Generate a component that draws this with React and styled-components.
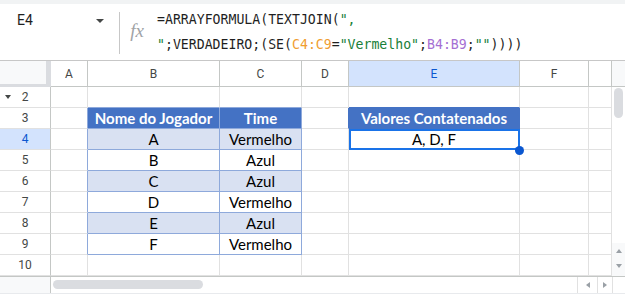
import React from "react";
import styled, { createGlobalStyle } from "styled-components";

const GlobalStyle = createGlobalStyle`
  html, body { margin: 0; padding: 0; background: #fff; }
  body { font-family: Roboto, "Liberation Sans", sans-serif; overflow: hidden; }
  * { box-sizing: border-box; }
`;

const Page = styled.div`
  width: 625px;
  height: 294px;
  display: flex;
  flex-direction: column;
  overflow: hidden;
`;

const TopStrip = styled.div`
  height: 4px;
  background: #f1f3f4;
`;

const FormulaBar = styled.div`
  height: 57px;
  display: flex;
  border-bottom: 1px solid #c7c7c7;
  background: #fff;
`;

const NameBox = styled.div`
  width: 119px;
  height: 32px;
  display: flex;
  align-items: center;
  justify-content: space-between;
  padding: 0 15px 0 17px;
  font-size: 14px;
  color: #1f1f1f;
`;

const Caret = styled.span`
  width: 0;
  height: 0;
  border-left: 4px solid transparent;
  border-right: 4px solid transparent;
  border-top: 4px solid #444746;
  margin-top: 1px;
`;

const Divider = styled.div`
  width: 1px;
  height: 42px;
  margin-top: 8px;
  background: #c7c7c7;
`;

const Fx = styled.div`
  width: 37px;
  display: flex;
  align-items: center;
  justify-content: center;
  padding: 0 3px 2px 0;
  font-family: "Liberation Serif", serif;
  font-style: italic;
  font-size: 19px;
  color: #a0a3a6;
`;

const Formula = styled.div`
  padding-top: 3px;
  font-family: "DejaVu Sans Mono", "Liberation Mono", monospace;
  font-size: 13.2px;
  line-height: 25px;
  color: #1f1f1f;
  white-space: pre;
`;

const Tok = styled.span`
  color: ${(p) =>
    p.$k === "str" ? "#188038" : p.$k === "r1" ? "#f09d31" : p.$k === "r2" ? "#a56fd3" : "#1f1f1f"};
`;

const Body = styled.div`
  display: flex;
`;

const Grid = styled.div`
  display: grid;
  grid-template-columns: 51px 37px 132px 82px 47px 171px 69px 23px;
  grid-template-rows: 26px repeat(9, 21px);
  width: 612px;
`;

const Corner = styled.div`
  background: #f8f9fa;
  border-right: 5px solid #dadce0;
  border-bottom: 3px solid #dadce0;
`;

const ColHead = styled.div`
  display: flex;
  align-items: center;
  justify-content: center;
  font-size: 12px;
  color: ${(p) => (p.$sel ? "#0b57d0" : "#444746")};
  background: ${(p) => (p.$sel ? "#d3e3fd" : "#fff")};
  border-right: 1px solid #c4c7c5;
  border-bottom: 1px solid #c4c7c5;
`;

const RowHead = styled.div`
  position: relative;
  display: flex;
  align-items: center;
  justify-content: center;
  font-size: 12px;
  color: ${(p) => (p.$sel ? "#0b57d0" : "#444746")};
  background: ${(p) => (p.$sel ? "#d3e3fd" : "#fff")};
  border-right: 1px solid #c4c7c5;
  border-bottom: 1px solid #e1e1e1;
`;

const GroupCaret = styled.span`
  position: absolute;
  left: 5px;
  top: 8px;
  width: 0;
  height: 0;
  border-left: 3.5px solid transparent;
  border-right: 3.5px solid transparent;
  border-top: 4px solid #444746;
`;

const Cell = styled.div`
  position: relative;
  display: flex;
  align-items: flex-end;
  justify-content: center;
  padding-bottom: 1px;
  font-family: Lato, "Open Sans", sans-serif;
  font-size: 15px;
  line-height: 18px;
  font-weight: ${(p) => (p.$head ? 700 : 400)};
  color: ${(p) => (p.$head ? "#fff" : "#000")};
  background: ${(p) => p.$bg || "#fff"};
  border-right: 1px solid ${(p) => p.$r || "#e1e1e1"};
  border-bottom: 1px solid ${(p) => p.$b || "#e1e1e1"};
  white-space: nowrap;
`;

const Selection = styled.div`
  position: absolute;
  top: 0;
  left: 0;
  right: -1px;
  bottom: -1px;
  border: 2px solid #1a73e8;
  pointer-events: none;
`;

const Handle = styled.div`
  position: absolute;
  right: -5px;
  bottom: -6px;
  width: 9px;
  height: 9px;
  border-radius: 50%;
  background: #0b57d0;
  z-index: 2;
`;

const VScroll = styled.div`
  width: 13px;
  display: flex;
  flex-direction: column;
`;

const VHead = styled.div`
  height: 26px;
  background: #f8f9fa;
  border-bottom: 1px solid #c4c7c5;
`;

const VTrack = styled.div`
  flex: 1;
  padding: 1px 1px 0 2px;
`;

const VThumb = styled.div`
  width: 9px;
  height: 30px;
  border-radius: 5px;
  background: #dadce0;
`;

const VArrows = styled.div`
  height: 33px;
  background: #f8f9fa;
  display: flex;
  flex-direction: column;
  align-items: center;
  justify-content: space-around;
  padding-bottom: 2px;
`;

const Arrow = styled.span`
  width: 0;
  height: 0;
  ${(p) =>
    p.$dir === "up"
      ? "border-left: 3.5px solid transparent; border-right: 3.5px solid transparent; border-bottom: 4px solid #9aa0a6;"
      : p.$dir === "down"
      ? "border-left: 3.5px solid transparent; border-right: 3.5px solid transparent; border-top: 4px solid #9aa0a6;"
      : p.$dir === "left"
      ? "border-top: 3.5px solid transparent; border-bottom: 3.5px solid transparent; border-right: 4px solid #9aa0a6;"
      : "border-top: 3.5px solid transparent; border-bottom: 3.5px solid transparent; border-left: 4px solid #9aa0a6;"}
`;

const HBar = styled.div`
  height: 18px;
  display: flex;
  border-top: 1px solid #c4c7c5;
  border-bottom: 1px solid #e8eaed;
`;

const HLeft = styled.div`
  width: 51px;
  background: #f8f9fa;
  border-right: 1px solid #c4c7c5;
`;

const HTrack = styled.div`
  flex: 1;
  padding: 3px 0 0 2px;
`;

const HThumb = styled.div`
  width: 150px;
  height: 9px;
  border-radius: 5px;
  background: #dadce0;
`;

const HBtn = styled.div`
  width: ${(p) => p.$w}px;
  display: flex;
  align-items: center;
  justify-content: center;
  border-left: 1px solid #e1e1e1;
`;

const HEnd = styled.div`
  width: 13px;
  border-left: 1px solid #e1e1e1;
`;

const COLS = ["A", "B", "C", "D", "E", "F", ""];
const TEAM = ["Vermelho", "Azul", "Azul", "Vermelho", "Azul", "Vermelho"];
const PLAYERS = ["A", "B", "C", "D", "E", "F"];

const BLUE = "#4472C4";
const LINE = "#8EA9DB";
const BAND = "#D9E1F2";

function cellProps(r, c) {
  const inTable = (c === "B" || c === "C") && r >= 3 && r <= 9;
  const p = { text: "" };
  if (inTable) {
    p.$r = LINE;
    p.$b = LINE;
    if (r === 3) {
      p.$head = true;
      p.$bg = BLUE;
      p.text = c === "B" ? "Nome do Jogador" : "Time";
    } else {
      p.$bg = r % 2 === 0 ? BAND : "#fff";
      p.text = c === "B" ? PLAYERS[r - 4] : TEAM[r - 4];
    }
  }
  if (c === "A" && r >= 3 && r <= 9) p.$r = LINE;
  if ((c === "B" || c === "C") && r === 2) p.$b = LINE;
  if (c === "E" && r === 3) {
    p.$head = true;
    p.$bg = BLUE;
    p.$r = BLUE;
    p.$b = BLUE;
    p.text = "Valores Contatenados";
  }
  if (c === "D" && r === 3) p.$r = BLUE;
  if (c === "E" && r === 2) p.$b = BLUE;
  if (c === "E" && r === 4) {
    p.text = "A, D, F";
    p.selected = true;
  }
  return p;
}

export default function App() {
  const rows = [2, 3, 4, 5, 6, 7, 8, 9, 10];
  return (
    <Page>
      <GlobalStyle />
      <TopStrip />
      <FormulaBar>
        <NameBox>
          <span>E4</span>
          <Caret />
        </NameBox>
        <Divider />
        <Fx>fx</Fx>
        <Formula>
          <div>
            <Tok>=ARRAYFORMULA(TEXTJOIN(</Tok>
            <Tok $k="str">",</Tok>
          </div>
          <div>
            <Tok $k="str">"</Tok>
            <Tok>;VERDADEIRO;(SE(</Tok>
            <Tok $k="r1">C4:C9</Tok>
            <Tok>=</Tok>
            <Tok $k="str">"Vermelho"</Tok>
            <Tok>;</Tok>
            <Tok $k="r2">B4:B9</Tok>
            <Tok>;</Tok>
            <Tok $k="str">""</Tok>
            <Tok>))))</Tok>
          </div>
        </Formula>
      </FormulaBar>
      <Body>
        <Grid>
          <Corner />
          {COLS.map((c, i) => (
            <ColHead key={"h" + i} $sel={c === "E"}>
              {c}
            </ColHead>
          ))}
          {rows.map((r) => (
            <React.Fragment key={r}>
              <RowHead $sel={r === 4}>
                {r === 2 && <GroupCaret />}
                {r}
              </RowHead>
              {COLS.map((c, i) => {
                const { text, selected, ...sp } = cellProps(r, c);
                return (
                  <Cell key={i} {...sp}>
                    {text}
                    {selected && (
                      <>
                        <Selection />
                        <Handle />
                      </>
                    )}
                  </Cell>
                );
              })}
            </React.Fragment>
          ))}
        </Grid>
        <VScroll>
          <VHead />
          <VTrack>
            <VThumb />
          </VTrack>
          <VArrows>
            <Arrow $dir="up" />
            <Arrow $dir="down" />
          </VArrows>
        </VScroll>
      </Body>
      <HBar>
        <HLeft />
        <HTrack>
          <HThumb />
        </HTrack>
        <HBtn $w={20}>
          <Arrow $dir="left" />
        </HBtn>
        <HBtn $w={15}>
          <Arrow $dir="right" />
        </HBtn>
        <HEnd />
      </HBar>
    </Page>
  );
}
